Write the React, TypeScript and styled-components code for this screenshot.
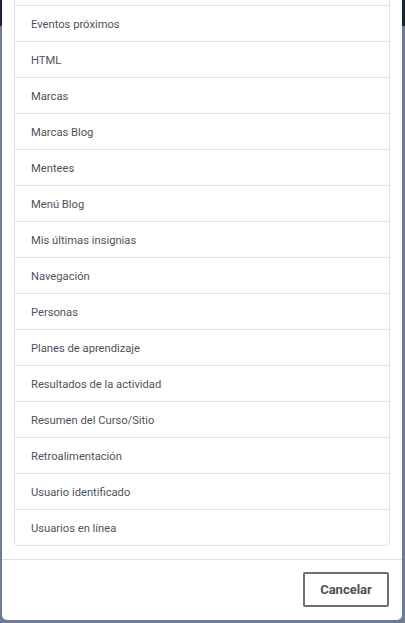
import React from "react";
import styled, { createGlobalStyle } from "styled-components";

const GlobalStyle = createGlobalStyle`
  html, body {
    margin: 0;
    padding: 0;
  }
  body {
    background: linear-gradient(to bottom, #1b2536 0, #1b2536 26px, #6e7b96 26px, #6e7b96 100%);
    font-family: Roboto, "Noto Sans", "Liberation Sans", sans-serif;
    overflow: hidden;
  }
`;

const Backdrop = styled.div`
  height: 623px;
  overflow: hidden;
  padding: 0 3px 0 2px;
  box-sizing: border-box;
`;

const Modal = styled.div`
  margin-top: -43px;
  background: #ffffff;
  border-radius: 0 0 5px 5px;
  display: flex;
  flex-direction: column;
`;

const ModalBody = styled.div`
  padding: 12px 12px 13px 12px;
`;

const List = styled.ul`
  list-style: none;
  margin: 0;
  padding: 0;
  border: 1px solid #dee2e6;
  border-radius: 4px;
`;

const Row = styled.li`
  height: 35px;
  box-sizing: border-box;
  display: flex;
  align-items: center;
  padding: 1px 16px 0 16px;
  font-size: 11.2px;
  color: #4d535b;
  border-bottom: 1px solid #dee2e6;
  height: 36px;
  &:last-child {
    border-bottom: none;
    height: 35px;
  }
`;

const Footer = styled.div`
  border-top: 1px solid #dee2e6;
  padding: 12px 13px 13px 12px;
  display: flex;
  justify-content: flex-end;
`;

const Button = styled.button`
  height: 35px;
  width: 86px;
  background: #ffffff;
  border: 2px solid #6a6f7b;
  border-radius: 2px;
  color: #4a505a;
  font-family: Roboto, "Noto Sans", "Liberation Sans", sans-serif;
  font-size: 13px;
  font-weight: 700;
  cursor: pointer;
`;

const items = [
  "",
  "Eventos próximos",
  "HTML",
  "Marcas",
  "Marcas Blog",
  "Mentees",
  "Menú Blog",
  "Mis últimas insignias",
  "Navegación",
  "Personas",
  "Planes de aprendizaje",
  "Resultados de la actividad",
  "Resumen del Curso/Sitio",
  "Retroalimentación",
  "Usuario identificado",
  "Usuarios en línea",
];

export default function App() {
  return (
    <>
      <GlobalStyle />
      <Backdrop>
        <Modal>
          <ModalBody>
            <List>
              {items.map((it, i) => (
                <Row key={i}>{it}</Row>
              ))}
            </List>
          </ModalBody>
          <Footer>
            <Button>Cancelar</Button>
          </Footer>
        </Modal>
      </Backdrop>
    </>
  );
}
